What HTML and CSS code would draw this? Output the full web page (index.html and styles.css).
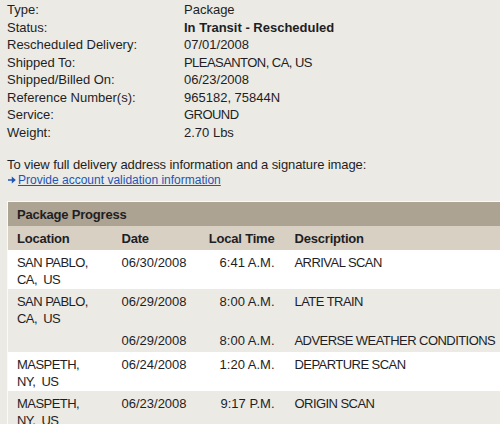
FILE: index.html
```html
<!DOCTYPE html>
<html lang="en">
<head>
    <meta charset="UTF-8">
    <title>Tracking Detail</title>
    <link rel="stylesheet" href="styles.css">
</head>
<body>

    <div class="details">
        <div class="label">Type:</div><div class="value">Package</div>
        <div class="label">Status:</div><div class="value status">In Transit - Rescheduled</div>
        <div class="label">Rescheduled Delivery:</div><div class="value">07/01/2008</div>
        <div class="label">Shipped To:</div><div class="value caps">PLEASANTON, CA, US</div>
        <div class="label">Shipped/Billed On:</div><div class="value">06/23/2008</div>
        <div class="label">Reference Number(s):</div><div class="value">965182, 75844N</div>
        <div class="label">Service:</div><div class="value caps">GROUND</div>
        <div class="label">Weight:</div><div class="value">2.70 Lbs</div>
    </div>

    <p class="note">
        To view full delivery address information and a signature image:<br>
        <span class="arrow"><svg width="8" height="8" viewBox="0 0 8 8"><path d="M0 3.3h5v1.4H0z M3.8 0.6L7.8 4 3.8 7.4z" fill="#1f55b5"/></svg></span><a href="#">Provide account validation information</a>
    </p>

    <table class="progress">
        <colgroup>
            <col class="col-loc">
            <col class="col-date">
            <col class="col-time">
            <col>
        </colgroup>
        <tr class="title">
            <th colspan="4">Package Progress</th>
        </tr>
        <tr class="heads">
            <th>Location</th>
            <th>Date</th>
            <th class="time">Local Time</th>
            <th class="desc">Description</th>
        </tr>
        <tr class="light">
            <td class="caps">SAN PABLO,<br>CA,&nbsp; US</td>
            <td>06/30/2008</td>
            <td class="time">6:41 A.M.</td>
            <td class="desc caps">ARRIVAL SCAN</td>
        </tr>
        <tr class="shade">
            <td class="caps">SAN PABLO,<br>CA,&nbsp; US</td>
            <td>06/29/2008</td>
            <td class="time">8:00 A.M.</td>
            <td class="desc caps">LATE TRAIN</td>
        </tr>
        <tr class="shade single">
            <td></td>
            <td>06/29/2008</td>
            <td class="time">8:00 A.M.</td>
            <td class="desc caps">ADVERSE WEATHER CONDITIONS</td>
        </tr>
        <tr class="light">
            <td class="caps">MASPETH,<br>NY,&nbsp; US</td>
            <td>06/24/2008</td>
            <td class="time">1:20 A.M.</td>
            <td class="desc caps">DEPARTURE SCAN</td>
        </tr>
        <tr class="shade">
            <td class="caps">MASPETH,<br>NY,&nbsp; US</td>
            <td>06/23/2008</td>
            <td class="time">9:17 P.M.</td>
            <td class="desc caps">ORIGIN SCAN</td>
        </tr>
    </table>

</body>
</html>
```

FILE: styles.css
```css
html {
    overflow: hidden;
}

body {
    margin: 0;
    padding: 1px 0 0 7px;
    background-color: #ebeae5;
    color: #1e1e24;
    font-family: "Liberation Sans", Arial, sans-serif;
    font-size: 13px;
}

.details {
    display: grid;
    grid-template-columns: 177px auto;
    line-height: 17.5px;
}

.status {
    font-weight: bold;
}

/* uppercase text runs narrower in the original rendering */
.caps {
    letter-spacing: -0.55px;
}

.note {
    margin: 16px 0 0 0;
    line-height: 15px;
    letter-spacing: -0.1px;
}

.arrow {
    display: inline-block;
    width: 10px;
    padding-left: 1px;
}

.note a {
    color: #1f55b5;
    font-size: 12px;
    letter-spacing: 0;
}

.progress {
    margin-top: 13px;
    width: 520px;
    border-collapse: collapse;
    table-layout: fixed;
    border-top: 1px solid #fafaf6;
    border-left: 1px solid #fafaf6;
}

.col-loc {
    width: 114px;
}

.col-date {
    width: 80px;
}

.col-time {
    width: 73px;
}

.progress th,
.progress td {
    text-align: left;
    padding: 0;
    line-height: 17px;
    vertical-align: top;
}

.progress th {
    letter-spacing: -0.2px;
}

.progress th:first-child,
.progress td:first-child {
    padding-left: 9px;
}

.progress .time {
    text-align: right;
}

.progress .desc {
    padding-left: 20px;
    white-space: nowrap;
}

.title th {
    background-color: #ada392;
    height: 24px;
    vertical-align: middle;
}

.heads th {
    background-color: #d8d0c3;
    height: 24px;
    vertical-align: middle;
}

.progress td {
    padding-top: 4px;
    padding-bottom: 1px;
}

.light {
    background-color: #ffffff;
}

.shade {
    background-color: #ebeae5;
}

.single td {
    height: 19px;
}
```
